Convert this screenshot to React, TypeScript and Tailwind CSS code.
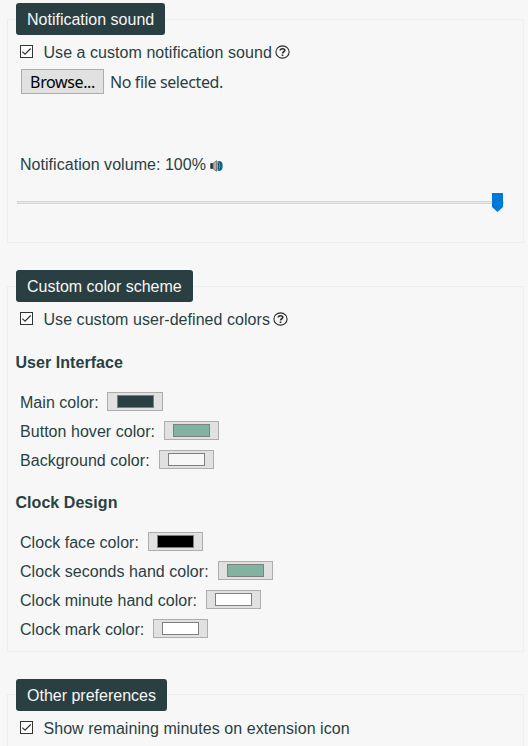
import type { ReactNode } from "react";

function Section({ title, width, className, children }: { title: string; width: string; className: string; children: ReactNode }) {
  return (
    <section className={`ml-[7px] w-[517px] border border-[#eeeeee] pl-2 ${className}`}>
      <h2 className={`flex h-8 items-center rounded-[3px] bg-[#2a3f42] pt-px pl-[11px] text-[#f7f7f7] ${width}`}>
        {title}
      </h2>
      {children}
    </section>
  );
}

function CheckRow({ label, help }: { label: string; help?: boolean }) {
  return (
    <label className="flex h-[34px] items-center pl-1">
      <svg className="mr-[10.5px] -mt-[2px]" width="13" height="13" viewBox="0 0 13 13" fill="none">
        <rect x="0.5" y="0.5" width="12" height="12" fill="#fff" stroke="#333333" />
        <path d="M2.4 6.6 5 9.1 10.7 3.5" stroke="#333333" strokeWidth="1.2" />
      </svg>
      <span className="pt-[2px] tracking-[0.05px]">{label}</span>
      {help && (
        <svg className="mt-px ml-[3px]" width="15" height="15" viewBox="0 0 15 15" fill="none" stroke="#2b2b2b">
          <ellipse cx="7.5" cy="7" rx="6.6" ry="6.1" strokeWidth="1.1" />
          <path d="M5.2 5.5C5.3 3.2 9.8 3.1 9.8 5.3C9.8 6.8 7.5 6.7 7.5 8.5" strokeWidth="1.6" />
          <path d="M7.5 9.5v1.5" strokeWidth="1.6" />
        </svg>
      )}
    </label>
  );
}

function ColorRow({ label, color, labelWidth, wide }: { label: string; color: string; labelWidth: string; wide?: boolean }) {
  return (
    <div className="flex h-[29px] items-center pl-1">
      <span className={`shrink-0 tracking-[0.04px] ${labelWidth}`}>{label}</span>
      <button className={`-mt-[2px] flex h-[19px] items-center justify-center border border-[#adadad] bg-[#e1e1e1] ${wide ? "w-14" : "w-[55px]"}`}>
        <span className={`h-[13px] w-[37px] border border-[#808080] ${color}`} />
      </button>
    </div>
  );
}

export default function App() {
  return (
    <main className="h-[746px] w-[528px] overflow-hidden bg-[#f7f7f7] pt-[19px] font-['Liberation_Sans',Arial,sans-serif] text-[16px] leading-[18px] whitespace-nowrap text-[#2a3f42]">
      <Section title="Notification sound" width="w-[149px]" className="h-[224px] [&>h2]:-mt-[17px]">
        <CheckRow label="Use a custom notification sound" help />
        <div className="flex h-[25px] items-center pl-[5px] font-['Noto_Sans',sans-serif] tracking-[-0.38px]">
          <button className="h-[25px] w-[83px] border border-[#adadad] bg-[#e1e1e1] text-black">Browse...</button>
          <span className="ml-[6px]">No file selected.</span>
        </div>
        <div className="mt-[62px] flex h-[18px] items-center pl-1">
          <span className="tracking-[0.04px]">Notification volume: 100%</span>
          <svg className="mt-[2px] ml-1" width="13" height="12" viewBox="0 0 13 12">
            <path d="M.3 3.2H3.5V8.8H.3Z" fill="#263036" />
            <path d="M3 3.5 6.5.7V11.3L3 8.5Z" fill="#b5adad" stroke="#6c6262" strokeWidth=".8" />
            <path d="M7.5 1.2Q13 0 12.7 6Q13 12 7.5 10.8Z" fill="#167aa4" />
            <path d="M8.2 3Q9.6 6 8.2 9M10.2 2.4Q12 6 10.2 9.6" fill="none" stroke="#163f56" strokeWidth=".8" />
            <path d="M9.3 3.5Q10.4 6 9.3 8.5" fill="none" stroke="#35c0d0" strokeWidth=".8" />
          </svg>
        </div>
        <div className="mt-[19px] ml-px flex h-[19px] w-[487px] items-center">
          <div className="h-[3px] flex-1 border border-r-0 border-[#d6d6d6] bg-[#e7eaea]" />
          <svg width="11" height="19" viewBox="0 0 11 19">
            <path d="M0 0H11V14L5.5 19 0 14Z" fill="#0078d7" />
          </svg>
          <div className="h-[3px] w-px bg-[#c9dce9]" />
        </div>
      </Section>

      <Section title="Custom color scheme" width="w-[177px]" className="mt-[43px] h-[366px] [&>h2]:-mt-[17px]">
        <CheckRow label="Use custom user-defined colors" help />
        <h3 className="mt-[18px] -ml-[0.5px] mb-[16px] leading-[18px] font-bold tracking-[0.05px]">User Interface</h3>
        <ColorRow label="Main color:" color="bg-[#2a3f42]" labelWidth="w-[87px]" wide />
        <ColorRow label="Button hover color:" color="bg-[#82b3a1]" labelWidth="w-[144px]" />
        <ColorRow label="Background color:" color="bg-[#f7f7f7]" labelWidth="w-[139px]" />
        <h3 className="mt-[19px] -ml-[0.5px] mb-[16px] leading-[18px] font-bold tracking-[0.05px]">Clock Design</h3>
        <ColorRow label="Clock face color:" color="bg-black" labelWidth="w-[128px]" />
        <ColorRow label="Clock seconds hand color:" color="bg-[#82b3a1]" labelWidth="w-[198px]" />
        <ColorRow label="Clock minute hand color:" color="bg-white" labelWidth="w-[186px]" />
        <ColorRow label="Clock mark color:" color="bg-white" labelWidth="w-[133px]" />
      </Section>

      <Section title="Other preferences" width="w-[151px]" className="mt-[42px] h-[100px] [&>h2]:-mt-[16px]">
        <CheckRow label="Show remaining minutes on extension icon" />
      </Section>
    </main>
  );
}
